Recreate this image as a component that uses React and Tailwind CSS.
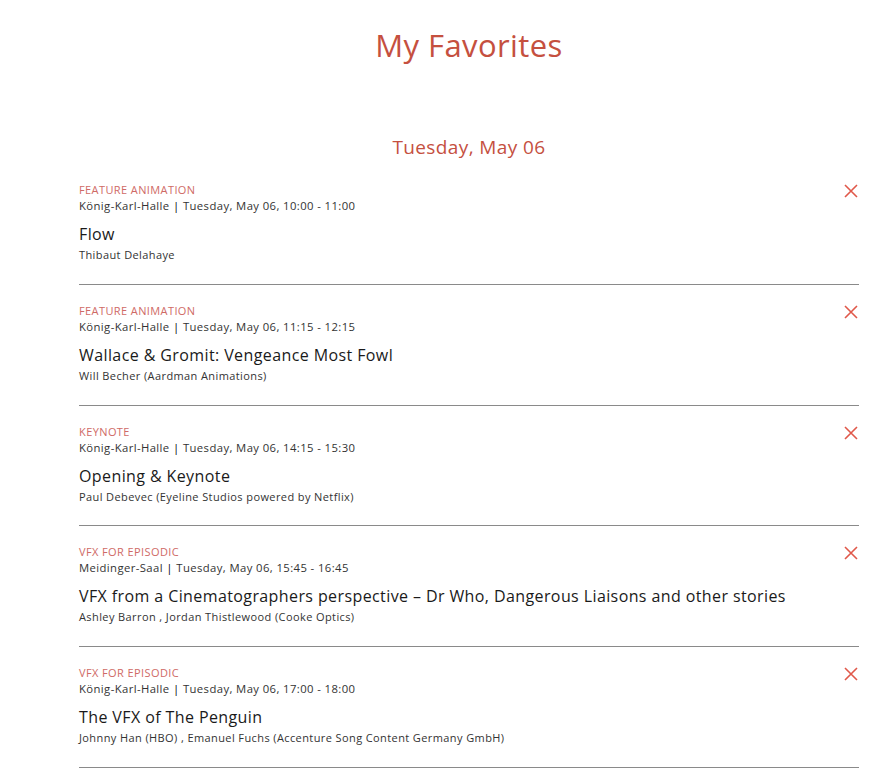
const favorites = [
    {
        category: 'FEATURE ANIMATION',
        room: 'König-Karl-Halle',
        time: 'Tuesday, May 06, 10:00 - 11:00',
        title: 'Flow',
        speakers: 'Thibaut Delahaye',
    },
    {
        category: 'FEATURE ANIMATION',
        room: 'König-Karl-Halle',
        time: 'Tuesday, May 06, 11:15 - 12:15',
        title: 'Wallace & Gromit: Vengeance Most Fowl',
        speakers: 'Will Becher (Aardman Animations)',
    },
    {
        category: 'KEYNOTE',
        room: 'König-Karl-Halle',
        time: 'Tuesday, May 06, 14:15 - 15:30',
        title: 'Opening & Keynote',
        speakers: 'Paul Debevec (Eyeline Studios powered by Netflix)',
    },
    {
        category: 'VFX FOR EPISODIC',
        room: 'Meidinger-Saal',
        time: 'Tuesday, May 06, 15:45 - 16:45',
        title: 'VFX from a Cinematographers perspective – Dr Who, Dangerous Liaisons and other stories',
        speakers: 'Ashley Barron , Jordan Thistlewood (Cooke Optics)',
    },
    {
        category: 'VFX FOR EPISODIC',
        room: 'König-Karl-Halle',
        time: 'Tuesday, May 06, 17:00 - 18:00',
        title: 'The VFX of The Penguin',
        speakers: 'Johnny Han (HBO) , Emanuel Fuchs (Accenture Song Content Germany GmbH)',
    },
];

function CloseIcon() {
    return (
        <svg width="14" height="14" viewBox="0 0 14 14" fill="none" stroke="#e0584a" strokeWidth="1.6">
            <path d="M1 1 L13 13 M13 1 L1 13" />
        </svg>
    );
}

export default function App() {
    return (
        <div className="min-h-screen bg-white font-['Open_Sans',sans-serif] tracking-wide text-[#222]">
            <div className="ml-[79px] w-[780px]">
                <h1 className="pt-[25px] text-center text-[31px] leading-[40px] text-[#c5503f]">My Favorites</h1>

                <h2 className="mt-[68px] mb-[3px] text-center text-[19px] leading-[28px] text-[#c5503f]">Tuesday, May 06</h2>

                {favorites.map((f, i) => (
                    <div key={i} className="flex justify-between border-b border-[#8a8a8a] pt-[18px] pb-[21.75px]">
                        <div>
                            <p className="text-[11px] leading-[16px] text-[#cf6a66]">{f.category}</p>
                            <p className="text-[11.3px] leading-[16px] text-[#333]">
                                {f.room} <span className="text-black">|</span> {f.time}
                            </p>
                            <h3 className="mt-[10px] text-[16px] leading-[20px] text-[#1a1a1a]">{f.title}</h3>
                            <p className="mt-[4px] text-[11px] leading-[14px] text-[#333]">{f.speakers}</p>
                        </div>
                        <button className="mt-[2px] mr-[1px] self-start">
                            <CloseIcon />
                        </button>
                    </div>
                ))}
            </div>
        </div>
    );
}
